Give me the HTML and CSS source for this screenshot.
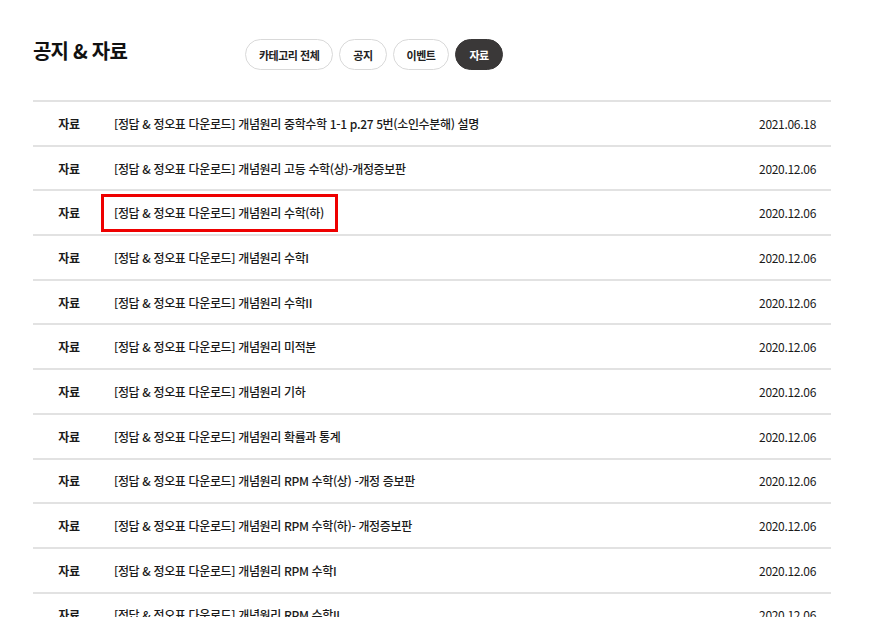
FILE: index.html
```html
<!DOCTYPE html>
<html lang="ko">
<head>
  <meta charset="UTF-8">
  <meta name="viewport" content="width=device-width, initial-scale=1.0">
  <link rel="stylesheet" href="styles.css">
  <title>공지 &amp; 자료</title>
</head>
<body>
  <div id="board">
    <div class="board-head">
      <h1 class="board-title">공지 &amp; 자료</h1>
      <div class="tabs">
        <button class="tab">카테고리 전체</button>
        <button class="tab">공지</button>
        <button class="tab">이벤트</button>
        <button class="tab active">자료</button>
      </div>
    </div>

    <ul class="list">
      <li class="row"><span class="cat">자료</span><span class="subject">[정답 &amp; 정오표 다운로드] 개념원리 중학수학 1-1 p.27 5번(소인수분해) 설명</span><span class="date">2021.06.18</span></li>
      <li class="row"><span class="cat">자료</span><span class="subject">[정답 &amp; 정오표 다운로드] 개념원리 고등 수학(상)-개정증보판</span><span class="date">2020.12.06</span></li>
      <li class="row"><span class="cat">자료</span><span class="subject"><span class="marked">[정답 &amp; 정오표 다운로드] 개념원리 수학(하)</span></span><span class="date">2020.12.06</span></li>
      <li class="row"><span class="cat">자료</span><span class="subject">[정답 &amp; 정오표 다운로드] 개념원리 수학I</span><span class="date">2020.12.06</span></li>
      <li class="row"><span class="cat">자료</span><span class="subject">[정답 &amp; 정오표 다운로드] 개념원리 수학II</span><span class="date">2020.12.06</span></li>
      <li class="row"><span class="cat">자료</span><span class="subject">[정답 &amp; 정오표 다운로드] 개념원리 미적분</span><span class="date">2020.12.06</span></li>
      <li class="row"><span class="cat">자료</span><span class="subject">[정답 &amp; 정오표 다운로드] 개념원리 기하</span><span class="date">2020.12.06</span></li>
      <li class="row"><span class="cat">자료</span><span class="subject">[정답 &amp; 정오표 다운로드] 개념원리 확률과 통계</span><span class="date">2020.12.06</span></li>
      <li class="row"><span class="cat">자료</span><span class="subject">[정답 &amp; 정오표 다운로드] 개념원리 RPM 수학(상) -개정 증보판</span><span class="date">2020.12.06</span></li>
      <li class="row"><span class="cat">자료</span><span class="subject">[정답 &amp; 정오표 다운로드] 개념원리 RPM 수학(하)- 개정증보판</span><span class="date">2020.12.06</span></li>
      <li class="row"><span class="cat">자료</span><span class="subject">[정답 &amp; 정오표 다운로드] 개념원리 RPM 수학I</span><span class="date">2020.12.06</span></li>
      <li class="row"><span class="cat">자료</span><span class="subject">[정답 &amp; 정오표 다운로드] 개념원리 RPM 수학II</span><span class="date">2020.12.06</span></li>
    </ul>
  </div>
</body>
</html>
```

FILE: styles.css
```css
body {
  font-family: "Noto Sans CJK KR", "Noto Sans", sans-serif;
  margin: 0;
  color: #222222;
  background: #ffffff;
  overflow: hidden;
}

#board {
  width: 798px;
  margin-left: 33px;
  padding-top: 39px;
}

.board-head {
  display: flex;
  align-items: flex-start;
  height: 61px;
}

.board-title {
  width: 212px;
  margin: 0;
  font-size: 20px;
  font-weight: 700;
  line-height: 24px;
  letter-spacing: -0.8px;
  color: #111111;
}

.tabs {
  display: flex;
  gap: 6px;
}

.tab {
  height: 31px;
  padding: 0 13px;
  border: 1px solid #d9d9d9;
  border-radius: 16px;
  background: #ffffff;
  font-family: inherit;
  font-size: 11px;
  font-weight: 700;
  letter-spacing: -0.5px;
  color: #222222;
  cursor: pointer;
}

.tab.active {
  background: #3a3838;
  border-color: #3a3838;
  color: #ffffff;
}

.list {
  list-style: none;
  margin: 0;
  padding: 0;
  border-top: 2px solid #e2e2e2;
}

.row {
  display: flex;
  align-items: center;
  height: 42.7px;
  border-bottom: 2px solid #e2e2e2;
  font-size: 12px;
  color: #1a1a1a;
}

.cat {
  width: 72px;
  text-align: center;
  font-weight: 700;
  letter-spacing: -0.2px;
}

.subject {
  flex: 1;
  padding-left: 9px;
  font-weight: 500;
  letter-spacing: -0.35px;
}

.date {
  padding-right: 15px;
  letter-spacing: -0.3px;
}

.marked {
  position: relative;
}

.marked::after {
  content: "";
  position: absolute;
  left: -13px;
  right: -14px;
  top: -10px;
  bottom: -11px;
  border: 3px solid #ee0000;
}
```
